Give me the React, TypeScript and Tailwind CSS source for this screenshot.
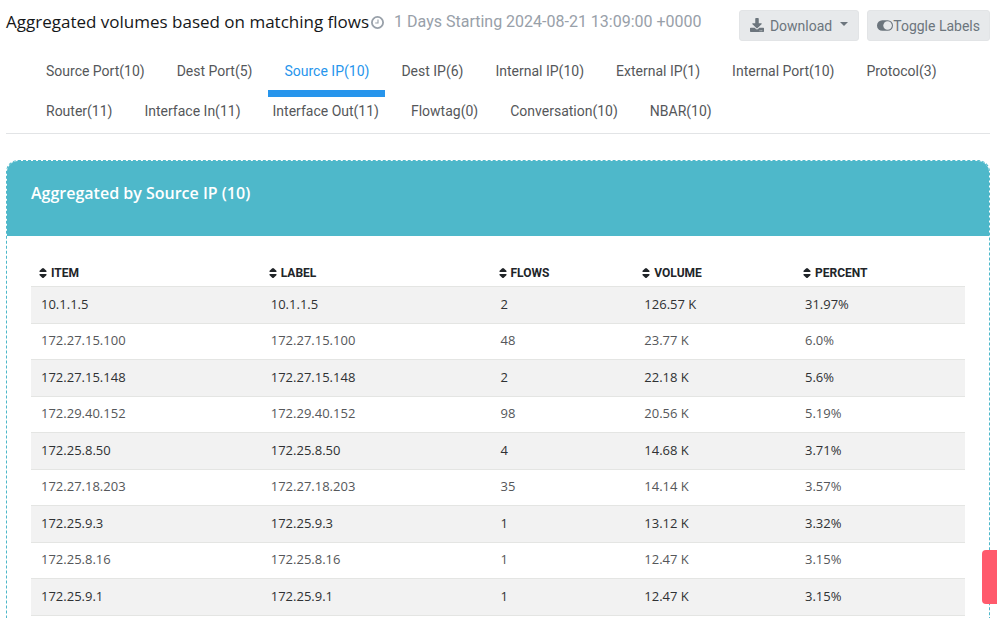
import { FaDownload } from 'react-icons/fa';

const tabs = [
  'Source Port(10)', 'Dest Port(5)', 'Source IP(10)', 'Dest IP(6)', 'Internal IP(10)', 'External IP(1)',
  'Internal Port(10)', 'Protocol(3)', 'Router(11)', 'Interface In(11)', 'Interface Out(11)', 'Flowtag(0)',
  'Conversation(10)', 'NBAR(10)',
];

const columns = [
  { name: 'Item', width: 'w-[24.6%]' },
  { name: 'Label', width: 'w-[24.6%]' },
  { name: 'Flows', width: 'w-[15.4%]' },
  { name: 'Volume', width: 'w-[17.2%]' },
  { name: 'Percent', width: 'w-[18.2%]' },
];

const rows = [
  ['10.1.1.5', '2', '126.57 K', '31.97%'],
  ['172.27.15.100', '48', '23.77 K', '6.0%'],
  ['172.27.15.148', '2', '22.18 K', '5.6%'],
  ['172.29.40.152', '98', '20.56 K', '5.19%'],
  ['172.25.8.50', '4', '14.68 K', '3.71%'],
  ['172.27.18.203', '35', '14.14 K', '3.57%'],
  ['172.25.9.3', '1', '13.12 K', '3.32%'],
  ['172.25.8.16', '1', '12.47 K', '3.15%'],
  ['172.25.9.1', '1', '12.47 K', '3.15%'],
];

function ClockIcon() {
  return (
    <svg viewBox="0 0 13 13" className="size-[13px] shrink-0" fill="none" stroke="currentColor" aria-hidden="true">
      <circle cx="6.5" cy="6.5" r="5.6" strokeWidth="1.8" />
      <path d="M7 3.5V7H4.2" strokeWidth="1.1" />
    </svg>
  );
}

function ToggleIcon() {
  return (
    <svg viewBox="0 0 16 11" className="h-[11px] w-4 shrink-0" aria-hidden="true">
      <rect x="0" y="0.2" width="16" height="10.6" rx="5.3" fill="currentColor" />
      <circle cx="10.6" cy="5.5" r="4.3" fill="#e7e9eb" />
    </svg>
  );
}

function SortIcon() {
  return (
    <svg viewBox="0 0 8 10" className="h-[10px] w-2 shrink-0" fill="currentColor" aria-hidden="true">
      <path d="M4 0Q4.5 0 5 0.5L7.4 2.8Q8 4 7 4H1Q0 4 0.6 2.8L3 0.5Q3.5 0 4 0Z" />
      <path d="M4 10Q4.5 10 5 9.5L7.4 7.2Q8 6 7 6H1Q0 6 0.6 7.2L3 9.5Q3.5 10 4 10Z" />
    </svg>
  );
}

export default function App() {
  return (
    <div className="flex min-h-screen flex-col bg-white pr-[7px] pl-[6px] font-[Roboto,sans-serif] text-sm text-[#55575a]">
      <header className="flex items-start justify-between pt-[10px]">
        <div className="flex items-center text-[#98a0a9]">
          <h1 className="font-['Open_Sans',sans-serif] text-[17px] leading-6 text-[#151719]">
            Aggregated volumes based on matching flows
          </h1>
          <span className="ml-[2px] flex items-center gap-[10px] text-base leading-6">
            <ClockIcon />
            1 Days Starting 2024-08-21 13:09:00 +0000
          </span>
        </div>
        <div className="flex gap-2 text-[#6c757d]">
          <button type="button" className="flex h-[31px] items-center rounded-[3px] border border-[#e2e4e6] bg-[#e7e9eb] px-[10px]">
            <FaDownload className="mr-[6px] mb-[2px] size-[14px]" />
            Download
            <span className="mb-[3px] ml-2 border-x-4 border-t-4 border-x-transparent" />
          </button>
          <button type="button" className="flex h-[31px] items-center rounded-[3px] border border-[#e2e4e6] bg-[#e7e9eb] px-[9px]">
            <ToggleIcon />
            Toggle Labels
          </button>
        </div>
      </header>

      <nav className="mt-4 border-b border-[#e2e4e6] px-6">
        <div className="-mb-1 flex flex-wrap">
          {tabs.map((tab) => (
            <a
              key={tab}
              href="#"
              className={
                tab === 'Source IP(10)'
                  ? 'h-10 border-b-[7px] border-[#2795ec] px-4 pt-[2px] leading-6 text-[#2795ec]'
                  : 'h-10 px-4 pt-[2px] leading-6'
              }
            >
              {tab}
            </a>
          ))}
        </div>
      </nav>

      <section className="mt-[26px] grow rounded-t-[12px] border border-b-0 border-dashed border-[#4eb8ca]">
        <header className="h-[75px] rounded-t-[11px] bg-[#4eb8ca] px-6 pt-5">
          <h2 className="font-['Open_Sans',sans-serif] text-base leading-6 font-semibold text-white">Aggregated by Source IP (10)</h2>
        </header>
        <div className="px-6 pt-6">
          <table className="w-full table-fixed border-separate border-spacing-0 border-b border-[#e4e5e3] text-left">
            <thead>
              <tr className="h-[26px]">
                {columns.map((c) => (
                  <th key={c.name} className={`${c.width} pl-2 text-xs font-bold text-[#212529] uppercase`}>
                    <span className="flex items-center gap-1">
                      <SortIcon />
                      {c.name}
                    </span>
                  </th>
                ))}
              </tr>
            </thead>
            <tbody className="font-['Open_Sans',sans-serif] text-[13px] leading-5">
              {rows.map(([ip, ...rest]) => (
                <tr key={ip} className="odd:h-[37px] odd:bg-[#f2f2f2] odd:text-[#2f3133] even:h-9">
                  {[ip, ip, ...rest].map((cell, i) => (
                    <td key={i} className="border-t border-[#e4e5e3] px-[10px] pt-0 pb-[3px]">{cell}</td>
                  ))}
                </tr>
              ))}
            </tbody>
          </table>
        </div>
      </section>

      <button type="button" aria-label="Feedback" className="fixed right-0 bottom-[14px] h-[54px] w-[15px] rounded-l-[4px] bg-[#ff5a6c]" />
    </div>
  );
}
